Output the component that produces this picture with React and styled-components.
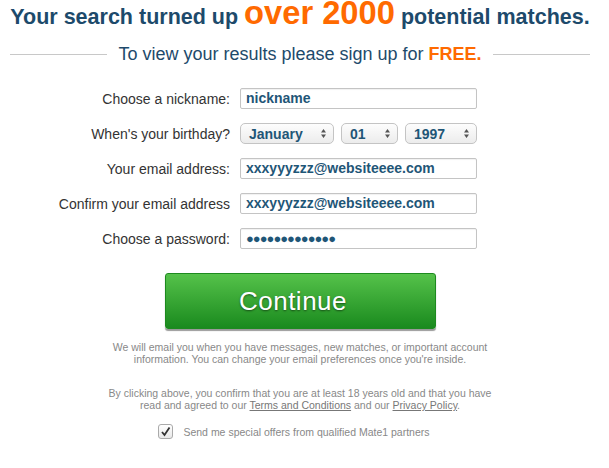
import React from 'react';
import styled, { createGlobalStyle } from 'styled-components';

const GlobalStyle = createGlobalStyle`
  body {
    margin: 0;
    background: #fff;
    font-family: "Liberation Sans", Arial, sans-serif;
  }
`;

const Page = styled.div`
  width: 600px;
  display: flex;
  flex-direction: column;
  align-items: center;
`;

const Headline = styled.h1`
  margin: 0;
  padding-top: 1px;
  font-size: 21.5px;
  font-weight: bold;
  color: #1d4a6b;
  line-height: 24px;
  white-space: nowrap;
`;

const Big = styled.span`
  font-size: 32.7px;
  line-height: 24px;
  color: #ff6a00;
`;

const SubRow = styled.div`
  width: 580px;
  margin-top: 15px;
  display: flex;
  align-items: center;
  gap: 11px;
`;

const Rule = styled.div`
  flex: 1;
  height: 1px;
  background: #c8c8c8;
`;

const SubTitle = styled.div`
  font-size: 18px;
  line-height: 20px;
  color: #1d4a6b;
  white-space: nowrap;
`;

const Free = styled.span`
  color: #ff6a00;
  font-weight: bold;
`;

const Form = styled.div`
  align-self: flex-start;
  margin: 24px 0 0 8px;
  display: grid;
  grid-template-columns: 222px 237px;
  column-gap: 10px;
  row-gap: 14px;
  align-items: center;
`;

const Label = styled.label`
  text-align: right;
  font-size: 14px;
  color: #333;
  white-space: nowrap;
`;

const Input = styled.div`
  box-sizing: border-box;
  height: 21px;
  border: 1px solid #c4c4c4;
  border-radius: 2px;
  padding: 0 5px;
  font-size: 14px;
  font-weight: bold;
  color: #1f5677;
  line-height: 19px;
  box-shadow: inset 0 1px 1px rgba(0, 0, 0, 0.06);
`;

const Dots = styled.span`
  letter-spacing: -1px;
  font-size: 13px;
`;

const Selects = styled.div`
  display: flex;
  justify-content: space-between;
`;

const Select = styled.div`
  box-sizing: border-box;
  width: ${(p) => p.w}px;
  height: 21px;
  border: 1px solid #c4c4c4;
  border-radius: 5px;
  background: linear-gradient(#fdfdfd, #ececec);
  padding: 0 6px 0 8px;
  display: flex;
  align-items: center;
  justify-content: space-between;
  font-size: 14px;
  font-weight: bold;
  color: #1f5677;
`;

const Arrows = styled.svg`
  width: 7px;
  height: 11px;
`;

const Button = styled.button`
  margin-top: 24px;
  width: 271px;
  height: 56px;
  padding: 0 14px 0 0;
  border: 1px solid #1d8a1f;
  border-radius: 3px;
  background: linear-gradient(#55c24a, #1a8a1e);
  box-shadow: 0 2px 1px #9a9a9a;
  color: #fff;
  font-family: "Liberation Sans", Arial, sans-serif;
  font-size: 26px;
  letter-spacing: 0.5px;
  text-shadow: 0 1px 2px rgba(0, 0, 0, 0.5);
  cursor: pointer;
`;

const Note = styled.p`
  margin: ${(p) => p.top}px 0 0;
  width: 395px;
  text-align: center;
  font-size: 10.5px;
  line-height: 12px;
  color: #888;
`;

const Link = styled.a`
  color: #777;
  text-decoration: underline;
`;

const OptIn = styled.div`
  margin: 13px 12px 0 0;
  display: flex;
  align-items: center;
  gap: 10px;
  font-size: 10.5px;
  color: #888;
`;

const Box = styled.div`
  width: 15px;
  height: 15px;
  box-sizing: border-box;
  border: 1px solid #aaa;
  border-radius: 3px;
  background: linear-gradient(#fff, #e8e8e8);
  display: flex;
  align-items: center;
  justify-content: center;
`;

function SelectArrows() {
  return (
    <Arrows viewBox="0 0 7 11">
      <path d="M3.5 1 L6 4.5 H1 Z M3.5 10 L6 6.5 H1 Z" fill="#555" />
    </Arrows>
  );
}

export default function App() {
  return (
    <>
      <GlobalStyle />
      <Page>
        <Headline>
          Your search turned up <Big>over 2000</Big> potential matches.
        </Headline>
        <SubRow>
          <Rule />
          <SubTitle>
            To view your results please sign up for <Free>FREE.</Free>
          </SubTitle>
          <Rule />
        </SubRow>
        <Form>
          <Label>Choose a nickname:</Label>
          <Input>nickname</Input>
          <Label>When's your birthday?</Label>
          <Selects>
            <Select w={94}>
              January <SelectArrows />
            </Select>
            <Select w={57}>
              01 <SelectArrows />
            </Select>
            <Select w={72}>
              1997 <SelectArrows />
            </Select>
          </Selects>
          <Label>Your email address:</Label>
          <Input>xxxyyyzzz@websiteeee.com</Input>
          <Label>Confirm your email address</Label>
          <Input>xxxyyyzzz@websiteeee.com</Input>
          <Label>Choose a password:</Label>
          <Input>
            <Dots>●●●●●●●●●●●●●</Dots>
          </Input>
        </Form>
        <Button>Continue</Button>
        <Note top={12}>
          We will email you when you have messages, new matches, or important account
          information. You can change your email preferences once you're inside.
        </Note>
        <Note top={22}>
          By clicking above, you confirm that you are at least 18 years old and that you have
          read and agreed to our <Link>Terms and Conditions</Link> and our{' '}
          <Link>Privacy Policy</Link>.
        </Note>
        <OptIn>
          <Box>
            <svg width="11" height="11" viewBox="0 0 11 11">
              <path d="M2 6 L4.5 9 L9.5 1.5" fill="none" stroke="#333" strokeWidth="1.8" />
            </svg>
          </Box>
          Send me special offers from qualified Mate1 partners
        </OptIn>
      </Page>
    </>
  );
}
